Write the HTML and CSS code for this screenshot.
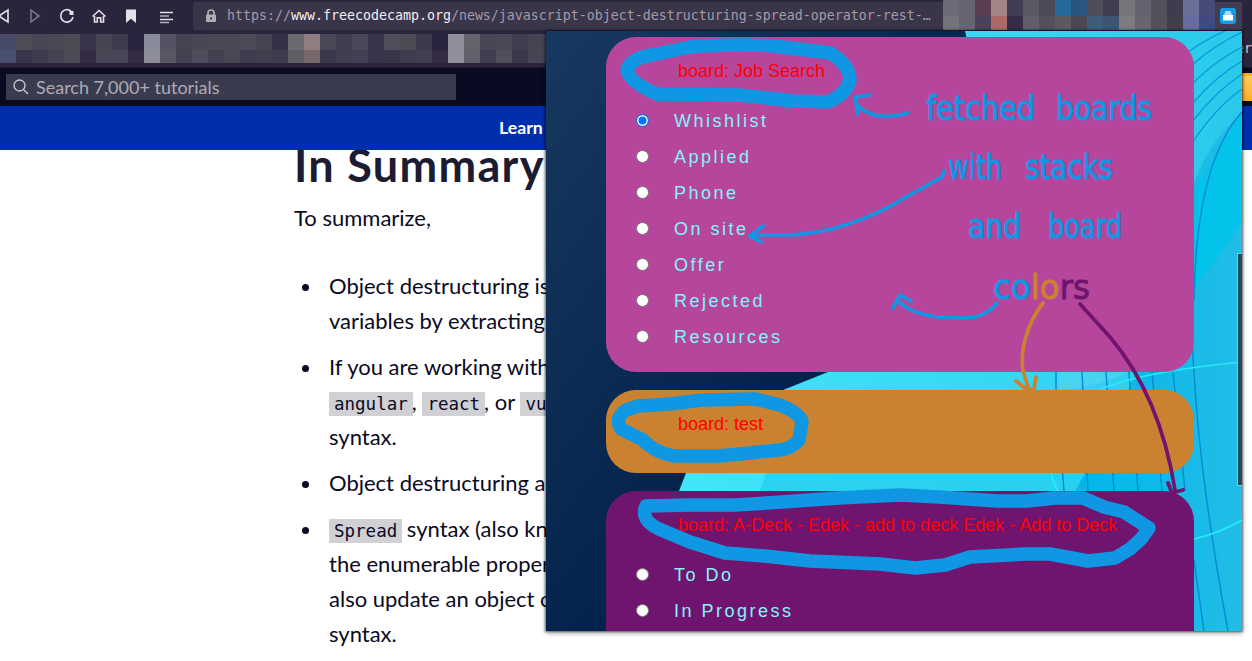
FILE: index.html
```
<!DOCTYPE html>
<html lang="en">
<head>
<meta charset="utf-8">
<title>In Summary</title>
<link rel="stylesheet" href="styles.css">
</head>
<body>
<div class="window">
  <header class="toolbar">
    <svg class="nav-icons" width="193" height="34" viewBox="0 0 193 34" fill="none" stroke="#e3e0e8" stroke-width="1.6">
      <path d="M8 10v12L-1 16z"/>
      <path d="M31 10v12l8-6z" stroke="#77718a"/>
      <path d="M71 11.2A6.2 6.2 0 1 0 73 17"/>
      <path d="M69.5 11h4v4h-4z" fill="#e3e0e8" stroke="none"/>
      <path d="M92.5 16.5l6.500-6 6.500 6M94.500 16v6h2.800v-4.200h3.400V22h2.800v-6"/>
      <path d="M126 9.500h10V23l-5-4.200-5 4.200z" fill="#e3e0e8" stroke="none"/>
      <path d="M160 12.500h13M160 19.500h13"/>
      <path d="M160 16h9M160 22.500h9" stroke="#b5b0c0"/>
    </svg>
    <div class="address">
      <svg width="12" height="16" viewBox="0 0 12 16"><path d="M3 7V5a3 3 0 0 1 6 0v2" fill="none" stroke="#b0afb4" stroke-width="1.7"/><rect x="1" y="6.500" width="10" height="7.500" rx="1" fill="#b0afb4"/><rect x="5" y="9.500" width="2" height="2" fill="#3b354a"/></svg>
      <span class="url">https://<b>www.freecodecamp.org</b>/news/javascript-object-destructuring-spread-operator-rest-…</span>
    </div>
    <div class="mosaic extensions" data-colors="6c6a76 666473 5b3f50 a38586 413e54 5a5863 4d4a58 236a9b 29557f 504d5a 413d50 77757b 656370 53515c 403c4e 687098 464c79 74737c 676573 4a4258 ab6a68 352d48 605e6b 524f5e 5a5a5f 4a4854 405b7b 3f5474 7c7b80 676570 53515c 423e4e 656ca0 404a80"></div>
    <div class="ext-active">
      <svg width="16" height="16" viewBox="0 0 16 16"><rect width="16" height="16" rx="3" fill="#129be6"/><path d="M5.500 3h5l1.500 4H4z" fill="#a9dcf8"/><path d="M3 7h10v5.500H3z" fill="#fff"/></svg>
    </div>
  </header>
  <div class="bookmarks">
    <div class="mosaic marks" data-colors="464a66 4e4c56 494655 4c4957 4d4a55 39334b 484454 3f3b4e 2b2440 8a8b9a 535364 474352 4a4655 4c4855 4c4855 4d4956 474352 352f48 6d6970 907d7f 4a4757 413d50 4b4859 393449 514e5b 4d4a55 3d394c 2b2440 918e9b 65626e 4a4655 4a4757 413d50 474353 4a4655 4a5070 3b354b 3f3b4d 464252 4e4b57 332c44 4a4655 4a4655 322b43 8d8d9a 575661 454151 504c5b 434050 4a4654 403c4e 443f4f 3f3b4d 605d67 766869 3b374a 433d50 434055 39334b 3b3549 403c4f 443f50 322b43 918e9b 63606b 433d51 514e5b 3c3649 484454 48444f"></div>
    <span class="overflow">er</span>
  </div>
  <div class="site-search">
    <div class="search-box">
      <svg width="16" height="16" viewBox="0 0 16 16" fill="none" stroke="#d0d0d5" stroke-width="1.300"><circle cx="6.500" cy="6.500" r="5.500"/><path d="M10.500 10.500l4.500 4.500"/></svg>
      <span>Search 7,000+ tutorials</span>
    </div>
    <div class="donate"></div>
  </div>
  <nav class="site-nav"><span>Learn</span></nav>
  <main class="article">
    <h1>In Summary</h1>
    <p class="intro">To summarize,</p>
    <ul>
      <li>Object destructuring is<br>variables by extracting</li>
      <li>If you are working with<br><code>angular</code>, <code>react</code>, or <code>vue</code><br>syntax.</li>
      <li>Object destructuring a</li>
      <li><code>Spread</code> syntax (also kn<br>the enumerable proper<br>also update an object o<br>syntax.</li>
    </ul>
  </main>
</div>

<section class="popup">
  <svg class="backdrop" width="696" height="600" viewBox="546 31 696 600">
    <defs>
      <linearGradient id="navy" x1="0" y1="0" x2=".55" y2=".35"><stop offset="0" stop-color="#17385f"/><stop offset="1" stop-color="#02214a"/></linearGradient>
      <linearGradient id="cyan" x1="0" y1="0" x2="1" y2="0"><stop offset="0" stop-color="#45e5fa"/><stop offset=".6" stop-color="#37d6f3"/><stop offset="1" stop-color="#2ac9ea"/></linearGradient>
      <linearGradient id="deep" x1="0" y1="0" x2="1" y2="0"><stop offset="0" stop-color="#00b6e8"/><stop offset="1" stop-color="#22bde7"/></linearGradient>
    </defs>
    <rect x="546" y="31" width="696" height="600" fill="url(#navy)"/>
    <path d="M965 31Q1000 180 960 315Q890 345 828 372L783 390Q710 425 686 473L679 491L660 631H1242V31z" fill="url(#cyan)"/>
    <path d="M766 473L760 491H1085L1095 473z" fill="#27cfee" opacity=".8"/>
    <path d="M1242 112Q1205 145 1190 195Q1160 350 1075 491L1194 631H1242z" fill="url(#deep)"/>
    <path d="M1230 240L1194 290V190L1242 112V220z" fill="#04c3ea"/>
    <path d="M1059 390Q1095 388 1128 372H1059z" fill="#56d5ef" opacity=".6"/>
    <g fill="none" stroke="#0799da" stroke-width="1.300">
      <path d="M1188 52Q1205 40 1225 31M1193 64Q1215 45 1242 32M1193 83Q1215 61 1242 47M1193 103Q1215 77 1242 61M1193 121Q1215 92 1242 74M1193 142Q1215 108 1242 89"/>
    </g>
    <g fill="none" stroke="#0489d2" stroke-width="1.400">
      <path d="M1056 372V390L1064 491M1082 372L1088 491M1106 372L1114 491M1129 372L1138 491M1152 372L1162 491M1173 372L1185 491M1192 340L1194 372Q1200 480 1228 631M1194 560L1204 631"/>
      <path d="M1242 112Q1196 163 1194 300"/>
    </g>
    <path d="M1099 390Q1140 372 1242 362M1051 473Q1053 483 1058 491M1194 539Q1220 533 1242 520" fill="none" stroke="#24edf8" stroke-width="1.700"/>
    <rect x="1237.500" y="253.500" width="6" height="232" fill="#234a57" stroke="#4edcf4"/>
  </svg>
  <div class="boards">
    <article class="board pink">
      <h2>board: Job Search</h2>
      <label><i class="radio checked"></i>Whishlist</label>
      <label><i class="radio"></i>Applied</label>
      <label><i class="radio"></i>Phone</label>
      <label><i class="radio"></i>On site</label>
      <label><i class="radio"></i>Offer</label>
      <label><i class="radio"></i>Rejected</label>
      <label><i class="radio"></i>Resources</label>
    </article>
    <article class="board orange"><h2>board: test</h2></article>
    <article class="board purple">
      <h2>board: A-Deck - Edek - add to deck Edek - Add to Deck</h2>
      <label><i class="radio"></i>To Do</label>
      <label><i class="radio"></i>In Progress</label>
    </article>
  </div>
</section>

<svg class="notes" width="1252" height="661" viewBox="0 0 1252 661">
  <g fill="none" stroke="#1097e4" stroke-width="13.500" stroke-linejoin="round">
    <path d="M652 55L690 47Q745 43 782 47L830 53Q850 65 850 80Q846 95 828 102L793 101L740 95L657 94Q629 82 627 70Q631 58 652 55z"/>
    <path d="M638 406L670 404L702 400L755 399L780 405Q801 414 802 422L799 440Q791 449 779 450L750 453L718 456L675 456Q655 453 643 440L621 429Q614 418 626 410z"/>
    <path d="M646 506L690 505L735 505L782 502L838 498L900 495L940 497L997 501L1027 501L1055 498L1083 498L1104 507L1124 512L1149 528L1141 539L1130 549L1115 558L1088 561L1050 554L1026 554L970 557L945 565L915 568L880 564L810 561L765 556L725 553L690 542L659 529Q640 520 646 506z"/>
  </g>
  <g fill="none" stroke="#1097e4" stroke-width="3.700" stroke-linecap="round" stroke-linejoin="round">
    <path d="M908 113Q884 120 869 113T855 98M858 114L855 97L870 95"/>
    <path d="M944 171L942 177L908 196Q850 232 790 235L750 235M763 226L750 236L761 242"/>
    <path d="M997 303Q990 313 975 317Q920 322 898 301M893 308L900 295L911 301"/>
  </g>
  <g fill="none" stroke="#cb8230" stroke-width="3.700" stroke-linecap="round" stroke-linejoin="round"><path d="M1043 303C1026 325 1020 352 1023 371L1029 390M1016 381L1027 390L1034 389L1036 377"/></g>
  <g fill="none" stroke="#70156f" stroke-width="3.700" stroke-linecap="round" stroke-linejoin="round"><path d="M1080 304L1110 337Q1160 396 1175 490M1168 483L1172 493L1183 490"/></g>
  <g class="scribble" fill="#1097e4" stroke="#1097e4" stroke-width=".9">
    <text x="926" y="120" textLength="109" lengthAdjust="spacingAndGlyphs">fetched</text>
    <text x="1056" y="120" textLength="96" lengthAdjust="spacingAndGlyphs">boards</text>
    <text x="948" y="179" textLength="54" lengthAdjust="spacingAndGlyphs">with</text>
    <text x="1025" y="179" textLength="88" lengthAdjust="spacingAndGlyphs">stacks</text>
    <text x="968" y="238" textLength="53" lengthAdjust="spacingAndGlyphs">and</text>
    <text x="1048" y="238" textLength="74" lengthAdjust="spacingAndGlyphs">board</text>
    <text x="993" y="299" textLength="97" lengthAdjust="spacingAndGlyphs">co<tspan fill="#cb8230" stroke="#cb8230">lo</tspan><tspan fill="#70156f" stroke="#70156f">rs</tspan></text>
  </g>
</svg>
<script src="mosaic.js"></script>
</body>
</html>
```
FILE: styles.css
```
* { box-sizing: border-box; }
body { margin: 0; width: 1252px; height: 661px; overflow: hidden; background: #fff; font-family: Lato, sans-serif; position: relative; }
.window { height: 661px; display: flex; flex-direction: column; overflow: hidden; }
.toolbar { height: 34px; flex: none; display: flex; background: #2b243d; }
.nav-icons { flex: none; }
.address { width: 750px; height: 28px; margin-top: 2px; padding-left: 12px; display: flex; align-items: center; gap: 10px; background: #3b354a; border-radius: 3px; color: #a09ca8; }
.url { font: 13.29px/28px "DejaVu Sans Mono", monospace; white-space: pre; }
.url b { font-weight: 400; color: #f1eff4; }
.mosaic { display: grid; grid-auto-rows: 16px; flex: none; overflow: hidden; }
.extensions { grid-template-columns: repeat(17, 16px); width: 272px; height: 30px; }
.ext-active { width: 27px; height: 28px; margin-top: 2px; padding: 6px 5px; background: #433d54; }
.ext-active svg { display: block; }
.bookmarks { height: 34px; flex: none; display: flex; justify-content: space-between; background: #2b243d; border-bottom: 1px solid #1b182c; }
.marks { grid-template-columns: repeat(35, 16px); width: 546px; height: 29px; }
.overflow { width: 13px; overflow: hidden; color: #d0cdd6; font: 13.29px/30px "DejaVu Sans Mono", monospace; direction: rtl; }
.site-search { height: 38px; flex: none; padding-left: 6px; display: flex; justify-content: space-between; align-items: center; background: #0a0a23; }
.search-box { width: 450px; height: 26px; padding-left: 7px; display: flex; align-items: center; gap: 7px; background: #3b3b4f; color: #acacb5; font-size: 18px; line-height: 26px; }
.donate { width: 10px; height: 28px; background: linear-gradient(#ffcc55, #feac32); border-top: 3px solid #feac32; }
.site-nav { height: 44px; flex: none; padding-left: 499px; background: #002ead; color: #fff; font-weight: 700; font-size: 17.700px; line-height: 43px; }
.article { flex: 1; min-height: 0; padding-left: 294px; overflow: hidden; color: #0a0a23; font-size: 22px; line-height: 35px; white-space: nowrap; }
.article h1 { margin: -9px 0 0; color: #1b1b32; font-size: 45px; letter-spacing: 1.300px; line-height: 48px; font-weight: 700; }
.article .intro { margin: 11px 0 33px; }
.article ul { margin: 0; padding-left: 35px; list-style: none; }
.article li { position: relative; margin-bottom: 11px; }
.article li::before { content: ""; position: absolute; left: -27px; top: 16px; width: 7px; height: 7px; border-radius: 50%; background: #0a0a23; }
.article code { margin-right: -1px; padding: 2px 5px; background: #d0d0d5; font: 17.500px/20px "DejaVu Sans Mono", monospace; }
.popup { position: absolute; left: 546px; top: 31px; width: 696px; height: 600px; overflow: hidden; box-shadow: 0 0 2px 1px rgba(0,0,0,.5), 0 2px 5px rgba(0,0,0,.35); font-family: "Liberation Sans", sans-serif; }
.backdrop { position: absolute; left: 0; top: 0; }
.boards { position: relative; padding: 6px 48px 0 60px; display: flex; flex-direction: column; gap: 18px; }
.board { border-radius: 30px; padding: 23px 0 17px 30px; }
.pink { background: #b5469c; height: 335px; }
.orange { background: #cb8230; height: 83px; }
.purple { background: #70156f; height: 180px; }
.board h2 { margin: 0 0 31px 42px; color: #f00; font-size: 18px; line-height: 22px; font-weight: 400; }
.board label { height: 36px; display: flex; align-items: center; gap: 25px; margin-top: 0; color: #84f3fb; font-size: 18px; letter-spacing: 2.500px; line-height: 36px; }
.board h2 + label { margin-top: -10px; }
.radio { width: 13px; height: 13px; margin-bottom: 2px; border: 1px solid #777; border-radius: 50%; background: #fff; }
.checked { border: 1.500px solid #0075ff; background: #0075ff; box-shadow: inset 0 0 0 1.500px #fff; }
.notes { position: absolute; left: 0; top: 0; pointer-events: none; }
.scribble { font: 33px "DejaVu Sans", sans-serif; font-weight: 400; }
```
FILE: mosaic.js
```
for (const box of document.querySelectorAll('.mosaic')) {
  for (const color of box.dataset.colors.split(' ')) {
    const cell = document.createElement('span');
    cell.style.background = '#' + color;
    box.append(cell);
  }
}
```
